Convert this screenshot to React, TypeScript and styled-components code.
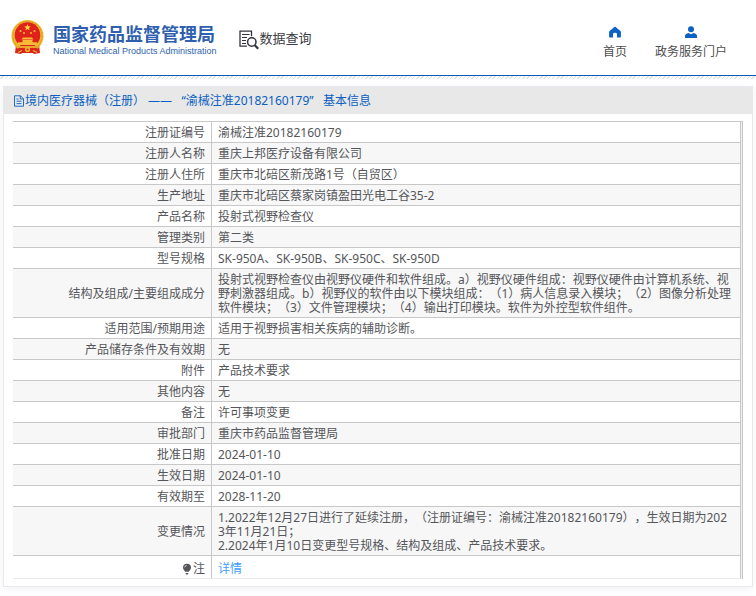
import React from "react";
import styled, { createGlobalStyle } from "styled-components";

const GlobalStyle = createGlobalStyle`
  *, *::before, *::after { box-sizing: border-box; }
  body {
    margin: 0;
    background: #fff;
    color: #55565a;
    font: 12px/14px "Noto Sans", "Noto Sans CJK SC", sans-serif;
    text-spacing-trim: space-all;
  }
  a { text-decoration: none; }
`;

const Header = styled.header`
  display: flex;
  align-items: center;
  height: 76px;
  padding: 0 29px 0 10px;
  border-bottom: 1px solid #0b5cb8;
`;

const Hatch = styled.div`
  height: 3px;
  background: repeating-linear-gradient(135deg, #fff 0 2px, #e2e2e2 2px 3px);
`;

const Brand = styled.a`
  display: flex;
  align-items: center;
  gap: 8px;
  color: #2f5fae;
`;

const BrandNames = styled.span`
  display: flex;
  flex-direction: column;
  padding-top: 6px;
`;

const BrandName = styled.span`
  font: 700 18px/20px "Noto Sans CJK SC", sans-serif;
  white-space: nowrap;
`;

const BrandEnglish = styled.span`
  font: 400 9px/16px "Liberation Sans", sans-serif;
  white-space: nowrap;
`;

const Query = styled.a`
  display: flex;
  align-items: center;
  margin: 4px auto 0 22px;
  color: #3c3c46;
  font-size: 13px;
  line-height: 20px;
  white-space: nowrap;
`;

const QueryName = styled.span`
  padding-bottom: 3px;
`;

const Nav = styled.nav`
  display: flex;
  gap: 28px;
  padding-top: 10px;
`;

const NavLink = styled.a`
  display: flex;
  flex-direction: column;
  align-items: center;
  gap: 7px;
  color: #4e4e4e;
  white-space: nowrap;

  svg { color: #0b62c4; }
`;

const Card = styled.main`
  margin: 7px 3px 9px;
  border: 1px solid #e8e9ee;
  box-shadow: 0 2px 8px rgba(0, 0, 0, 0.06);
`;

const CardTitle = styled.h1`
  display: flex;
  align-items: center;
  margin: 0;
  height: 27px;
  padding: 0 9px;
  background: #e8e8e8;
  color: #0b5fc0;
  font-size: 12px;
  font-weight: 400;
  line-height: 14px;
`;

const CardBody = styled.div`
  padding: 7px 9px;
`;

const TableFrame = styled.div`
  padding-right: 1px;
  border-top: 1px solid #c8c8c8;
  border-right: 1px solid #c8c8c8;
  background: #f0f0f0;
`;

const Table = styled.table`
  width: 100%;
  border-collapse: separate;
  border-spacing: 0;
  table-layout: fixed;
  background: #fff;
`;

const Row = styled.tr`
  &:nth-child(even) { background: #f7f7f7; }
  &:last-child { background: #fff; }
  &:last-child > * {
    height: 23px;
    padding-top: 6px;
    border-bottom-color: #e8e9f2;
  }
`;

const Label = styled.th`
  width: 199px;
  padding: 4px 6px 2px;
  border-right: 1px solid #c8c8c8;
  border-bottom: 1px solid #c8c8c8;
  font-weight: 400;
  text-align: right;
  vertical-align: middle;
`;

const Value = styled.td`
  padding: 4px 7px 2px 6px;
  border-right: 1px solid #c8c8c8;
  border-bottom: 1px solid #c8c8c8;
  vertical-align: middle;
  word-break: break-all;
  line-break: anywhere;
  white-space: pre-line;
`;

const NoteLabel = styled.span`
  display: flex;
  align-items: center;
  justify-content: flex-end;
  gap: 1px;
`;

const DetailLink = styled.a`
  color: #409eff;
`;

const Emblem = () => (
  <svg width="35" height="37" viewBox="0 0 35 37" aria-hidden="true">
    <path d="M6 26 L5 34 L11 35 L14 32 H21 L24 35 L30 34 L29 26Z" fill="#d9251c" />
    <circle cx="17.5" cy="17" r="16" fill="#f0b92d" />
    <circle cx="17.5" cy="17" r="14.6" fill="none" stroke="#dc9220" strokeWidth="1" strokeDasharray="2 1" />
    <circle cx="17.5" cy="16" r="12.8" fill="#df231c" />
    <path d="m17.5 5.2 .9 2.1 2.3.2-1.7 1.5.5 2.3-2-1.2-2 1.2.5-2.3-1.7-1.5 2.3-.2z" fill="#f9d53c" />
    <g fill="#f5bb35">
      <circle cx="10.5" cy="12" r="1.1" />
      <circle cx="24.5" cy="12" r="1.1" />
      <circle cx="14" cy="14" r="1" />
      <circle cx="21" cy="14" r="1" />
      <path d="M13 18.5h9l1.5 2h-12z" />
      <path d="M12.5 21h10v2.2h4.5V26H8v-2.8h4.5z" />
    </g>
    <path d="M5 27h25l-3 2.5H8z" fill="#e9a529" />
    <path d="M8 29h19l-1.5 5H9.5z" fill="#d9251c" />
    <circle cx="17.5" cy="30.5" r="2.6" fill="#f1b82e" />
    <circle cx="17.5" cy="30.5" r="1.1" fill="#d9251c" />
    <path d="M8 33.5l4-2M27 33.5l-4-2" stroke="#efb22c" strokeWidth="1.2" />
  </svg>
);

const QueryIcon = () => (
  <svg width="21" height="20" viewBox="0 0 21 20" fill="none" stroke="#34343f" aria-hidden="true">
    <path d="M8 16.2H1V1.2h11.5v5" strokeWidth="1.3" />
    <path d="M3 4.5h7.5M3 7.5h5M3 10.5h4M3 13.5h4" strokeWidth="1" />
    <circle cx="12.8" cy="12" r="4.2" strokeWidth="1.5" />
    <path d="m15.8 15.2 3.4 3.6" strokeWidth="2.2" />
  </svg>
);

const HomeIcon = () => (
  <svg width="12" height="12" viewBox="0 0 12 12" fill="currentColor" aria-hidden="true">
    <path d="M6 .5 11.4 5q.5.5.5 1v4.8q0 .7-.7.7H8V8.2Q8 6.8 6 6.8T4 8.2v3.3H.8q-.7 0-.7-.7V6q0-.5.5-1z" />
  </svg>
);

const UserIcon = () => (
  <svg width="12" height="12" viewBox="0 0 12 12" fill="currentColor" aria-hidden="true">
    <circle cx="6" cy="3.2" r="3" />
    <path d="M0 12V10q0-2.2 3.5-3L6 8.2 8.5 7Q12 7.8 12 10v2z" />
  </svg>
);

const DocumentIcon = () => (
  <svg width="12" height="12" viewBox="0 0 12 12" fill="none" stroke="currentColor" aria-hidden="true">
    <path d="M1.5.8h6l3 3v7.4h-9zM7.3.8V4h3.2M3.5 4h2M3.5 6.2h5M3.5 8.6h5" strokeWidth=".9" />
  </svg>
);

const BulbIcon = () => (
  <svg width="10" height="12" viewBox="0 0 10 12" aria-hidden="true">
    <path d="M5 .8a4 4 0 0 1 4 4c0 2-1.8 2.8-2.2 4H3.2C2.8 7.6 1 6.8 1 4.8a4 4 0 0 1 4-4z" fill="#55565a" />
    <path d="M3.5 10h3l-.7 1.5H4.2z" fill="#55565a" />
    <path d="M2.7 4.3A2.4 2.4 0 0 1 4.6 2.4" fill="none" stroke="#fff" strokeWidth=".8" />
  </svg>
);

const rows: [string, string][] = [
  ["注册证编号", "渝械注准20182160179"],
  ["注册人名称", "重庆上邦医疗设备有限公司"],
  ["注册人住所", "重庆市北碚区新茂路1号（自贸区）"],
  ["生产地址", "重庆市北碚区蔡家岗镇盈田光电工谷35-2"],
  ["产品名称", "投射式视野检查仪"],
  ["管理类别", "第二类"],
  ["型号规格", "SK-950A、SK-950B、SK-950C、SK-950D"],
  [
    "结构及组成/主要组成成分",
    "投射式视野检查仪由视野仪硬件和软件组成。a）视野仪硬件组成：视野仪硬件由计算机系统、视野刺激器组成。b）视野仪的软件由以下模块组成：（1）病人信息录入模块；（2）图像分析处理软件模块；（3）文件管理模块；（4）输出打印模块。软件为外控型软件组件。",
  ],
  ["适用范围/预期用途", "适用于视野损害相关疾病的辅助诊断。"],
  ["产品储存条件及有效期", "无"],
  ["附件", "产品技术要求"],
  ["其他内容", "无"],
  ["备注", "许可事项变更"],
  ["审批部门", "重庆市药品监督管理局"],
  ["批准日期", "2024-01-10"],
  ["生效日期", "2024-01-10"],
  ["有效期至", "2028-11-20"],
  [
    "变更情况",
    "1.2022年12月27日进行了延续注册，（注册证编号：渝械注准20182160179），生效日期为2023年11月21日；\n2.2024年1月10日变更型号规格、结构及组成、产品技术要求。",
  ],
];

export default function App() {
  return (
    <>
      <GlobalStyle />
      <Header>
        <Brand href="#">
          <Emblem />
          <BrandNames>
            <BrandName>国家药品监督管理局</BrandName>
            <BrandEnglish>National Medical Products Administration</BrandEnglish>
          </BrandNames>
        </Brand>
        <Query href="#">
          <QueryIcon />
          <QueryName>数据查询</QueryName>
        </Query>
        <Nav>
          <NavLink href="#">
            <HomeIcon />
            首页
          </NavLink>
          <NavLink href="#">
            <UserIcon />
            政务服务门户
          </NavLink>
        </Nav>
      </Header>
      <Hatch />
      <Card>
        <CardTitle>
          <DocumentIcon />
          境内医疗器械（注册） ——&nbsp;&nbsp; “渝械注准20182160179”&nbsp;&nbsp; 基本信息
        </CardTitle>
        <CardBody>
          <TableFrame>
            <Table>
              <tbody>
                {rows.map(([label, value]) => (
                  <Row key={label}>
                    <Label scope="row">{label}</Label>
                    <Value>{value}</Value>
                  </Row>
                ))}
                <Row>
                  <Label scope="row">
                    <NoteLabel>
                      <BulbIcon />注
                    </NoteLabel>
                  </Label>
                  <Value>
                    <DetailLink href="#">详情</DetailLink>
                  </Value>
                </Row>
              </tbody>
            </Table>
          </TableFrame>
        </CardBody>
      </Card>
    </>
  );
}
